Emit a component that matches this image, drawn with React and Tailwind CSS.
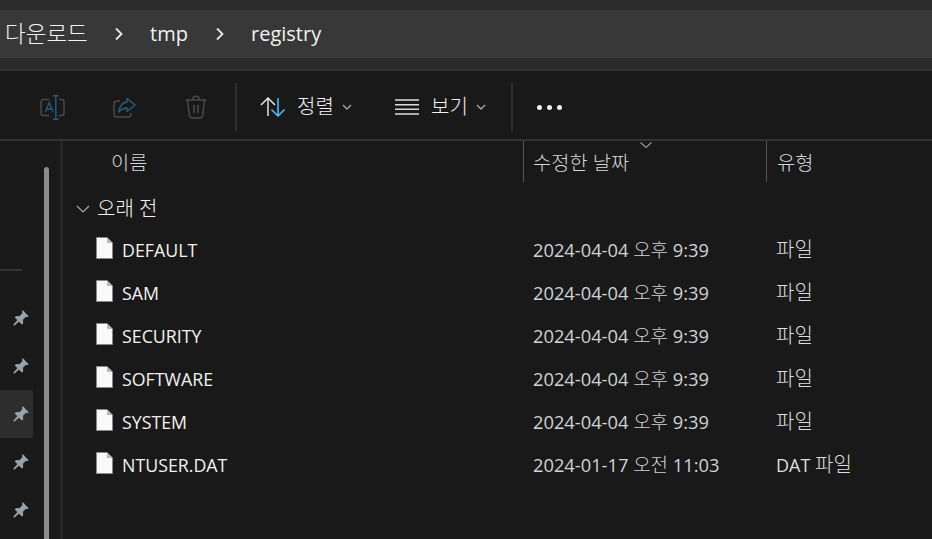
import React from 'react'

const font = '[font-family:"Open_Sans","Noto_Sans_CJK_KR",sans-serif]'

const files = [
  { name: 'DEFAULT', day: '2024-04-04', ampm: '오후', time: '9:39', type: '파일' },
  { name: 'SAM', day: '2024-04-04', ampm: '오후', time: '9:39', type: '파일' },
  { name: 'SECURITY', day: '2024-04-04', ampm: '오후', time: '9:39', type: '파일' },
  { name: 'SOFTWARE', day: '2024-04-04', ampm: '오후', time: '9:39', type: '파일' },
  { name: 'SYSTEM', day: '2024-04-04', ampm: '오후', time: '9:39', type: '파일' },
  { name: 'NTUSER.DAT', day: '2024-01-17', ampm: '오전', time: '11:03', type: '파일', ext: 'DAT' },
]

const Crumb = () => (
  <svg width="10" height="14" viewBox="0 0 10 14" fill="none" stroke="#e8e8e8" strokeWidth="1.8">
    <path d="M2 1.5 L7.5 7 L2 12.5" />
  </svg>
)

const SmallChevron = () => (
  <svg width="10" height="6" viewBox="0 0 10 6" fill="none" stroke="#a8a8a8" strokeWidth="1.3">
    <path d="M1 1 L5 5 L9 1" />
  </svg>
)

const RenameIcon = () => (
  <svg width="25" height="25" viewBox="0 0 25 25" fill="none" className="block">
    <path d="M9 4.5 H3.5 Q1 4.5 1 7 V18 Q1 20.5 3.5 20.5 H9" stroke="#4a4a4a" strokeWidth="1.4" />
    <path d="M19 4.5 H21.5 Q24 4.5 24 7 V18 Q24 20.5 21.5 20.5 H19" stroke="#4a4a4a" strokeWidth="1.4" />
    <path d="M5.5 17 L9.2 7.5 L13 17 M6.8 14 H11.7" stroke="#2a5a7c" strokeWidth="1.3" />
    <path d="M13 0.8 H18.5 M15.8 0.8 V24.2 M13 24.2 H18.5" stroke="#2a5a7c" strokeWidth="1.4" />
  </svg>
)

const ShareIcon = () => (
  <svg width="23" height="21" viewBox="0 0 23 21" fill="none" className="block">
    <path d="M7 4 H4 Q1 4 1 7 V17 Q1 20 4 20 H15 Q18 20 18 17 V16" stroke="#4a4a4a" strokeWidth="1.5" />
    <path d="M14 1.5 L22 8 L14 14.5 V11 Q9 11 6 15 Q6.5 6 14 5 Z" stroke="#2a5a7c" strokeWidth="1.5" strokeLinejoin="round" />
  </svg>
)

const TrashIcon = () => (
  <svg width="22" height="24" viewBox="0 0 22 24" fill="none" stroke="#4a4a4a" strokeWidth="1.5" className="block">
    <path d="M0.5 5 H21.5 M7.5 5 Q7.5 1.2 11 1.2 Q14.5 1.2 14.5 5" />
    <path d="M2.5 5 L4.3 20 Q4.6 23 7.5 23 H14.5 Q17.4 23 17.7 20 L19.5 5" />
    <path d="M9 10 V18 M13 10 V18" />
  </svg>
)

const SortIcon = () => (
  <svg width="26" height="20" viewBox="0 0 26 20" fill="none" strokeWidth="1.5" className="block">
    <path d="M1 8 L8 1 L15 8 M8 1 V19" stroke="#e0e0e0" />
    <path d="M18 1 V19 M11.5 12.5 L18 19 L24.5 12.5" stroke="#4cc2ff" />
  </svg>
)

const ViewIcon = () => (
  <svg width="24" height="16" viewBox="0 0 24 16" fill="none" stroke="#dcdcdc" strokeWidth="1.4" className="block">
    <path d="M0 1 H24 M0 5.7 H24 M0 10.3 H24 M0 15 H24" />
  </svg>
)

const PinIcon = () => (
  <svg width="16" height="16" viewBox="0 0 16 16" fill="#98a2a9" className="block">
    <path d="M9.8 0.3 L15.7 6.2 L14.4 7.2 L12.9 6.8 L10 9.7 L10.2 13.2 L8.8 14.4 L1.8 7.4 L3 6 L6.4 6.2 L9.3 3.2 L8.9 1.6 Z" />
    <path d="M4.6 9.8 L6.2 11.4 L1.2 15.8 L0.2 14.8 Z" />
  </svg>
)

const FileIcon = () => (
  <svg width="17" height="22" viewBox="0 0 17 22" className="block">
    <path d="M0.5 0.5 H11 L16.5 6 V21.5 H0.5 Z" fill="#fafafa" stroke="#8a8a8a" />
    <path d="M11 0.5 V6 H16.5 Z" fill="#b8b8b8" />
  </svg>
)

const Row = ({ file }) => (
  <div className="flex h-[43px] items-center">
    <div className="flex w-[461px] items-center pl-[33px] text-[17.8px]">
      <div className="-translate-y-[2px]"><FileIcon /></div>
      <span className="ml-[9px] text-[#f2f2f2]">{file.name}</span>
    </div>
    <div className="w-[243px] pl-[9px] text-[18.3px] text-[#cfd3d6]">
      {file.day} <span className="text-[19px] font-light">{file.ampm}</span> {file.time}
    </div>
    <div className="pl-[9px] text-[#dedede]">
      {file.ext && `${file.ext} `}<span className="text-[20px] font-light">{file.type}</span>
    </div>
  </div>
)

export default function App() {
  return (
    <div className={`flex h-[539px] w-[932px] flex-col overflow-hidden bg-[#191919] text-[18px] leading-[26px] ${font}`}>
      {/* address bar */}
      <div className="h-[69px] shrink-0 bg-[#2b2b2b] py-[10px]">
        <div className="flex h-[48px] items-center bg-[#383838] pl-[5px] text-[20px] text-[#f2f2f2]">
          <span className="w-[83px] text-[22.5px] font-light">다운로드</span>
          <span className="ml-[26px] flex w-[10px]"><Crumb /></span>
          <span className="ml-[26px] w-[38px]">tmp</span>
          <span className="ml-[27px] flex w-[10px]"><Crumb /></span>
          <span className="ml-[26px]">registry</span>
        </div>
      </div>

      {/* command bar */}
      <div className="flex h-[72px] shrink-0 items-center border-y-2 border-[#333333] pl-[40px] pt-[4px] text-[20px] font-light">
        <RenameIcon />
        <div className="ml-[48px]"><ShareIcon /></div>
        <div className="ml-[49px]"><TrashIcon /></div>
        <div className="ml-[28px] h-[48px] w-[2px] bg-[#2e2e2e]" />
        <div className="ml-[23px]"><SortIcon /></div>
        <span className="ml-[11px] w-[37px] text-[#f2f2f2]">정렬</span>
        <div className="ml-[8px]"><SmallChevron /></div>
        <div className="ml-[43px]"><ViewIcon /></div>
        <span className="ml-[12px] w-[37px] text-[#f2f2f2]">보기</span>
        <div className="ml-[8px]"><SmallChevron /></div>
        <div className="ml-[25px] h-[48px] w-[2px] bg-[#2e2e2e]" />
        <div className="ml-[24px] flex gap-[5px]">
          <span className="h-[5px] w-[5px] rounded-full bg-[#f2f2f2]" />
          <span className="h-[5px] w-[5px] rounded-full bg-[#f2f2f2]" />
          <span className="h-[5px] w-[5px] rounded-full bg-[#f2f2f2]" />
        </div>
      </div>

      <div className="flex min-h-0 flex-1">
        {/* navigation pane */}
        <div className="flex w-[63px] shrink-0 border-r-[3px] border-[#252525]">
          <div className="w-[33px] shrink-0 pt-[128px]">
            <div className="mr-[11px] h-[2px] bg-[#333333]" />
            <div className="mt-[23px]">
              {[0, 1, 2, 3, 4].map((i) => (
                <div
                  key={i}
                  className={`flex h-[48px] items-center justify-center rounded-r-[2px] pl-[9px] ${i === 2 ? 'bg-[#2d2d2d]' : ''}`}
                >
                  <PinIcon />
                </div>
              ))}
            </div>
          </div>
          <div className="ml-[11px] mt-[26px] w-[5px] rounded-t-full bg-[#8c8c8c]" />
        </div>

        {/* file list */}
        <div className="relative min-w-0 flex-1">
          <div className="absolute left-[577px] top-[1px]">
            <svg width="12" height="6" viewBox="0 0 12 6" fill="none" stroke="#9a9a9a" strokeWidth="1.1" className="block">
              <path d="M0.5 0.5 L6 5.5 L11.5 0.5" />
            </svg>
          </div>
          <div className="flex h-[41px] text-[19.8px] font-light">
            <div className="w-[460px] pl-[48px] pt-[9px] text-[#d4d8da]">이름</div>
            <div className="w-[243px] border-l border-[#555555] pl-[9px] pt-[9px] text-[#d4d8da]">수정한 날짜</div>
            <div className="border-l border-[#555555] pl-[10px] pt-[9px] text-[#d4d8da]">유형</div>
          </div>
          <div className="flex h-[46px] items-center pl-[13px] pt-[8px] text-[20px] font-light text-[#f2f2f2]">
            <svg width="14" height="8" viewBox="0 0 14 8" fill="none" stroke="#a8a8a8" strokeWidth="1.2" className="block">
              <path d="M1 1 L7 7 L13 1" />
            </svg>
            <span className="ml-[7px]">오래 전</span>
          </div>
          {files.map((file) => (
            <Row key={file.name} file={file} />
          ))}
        </div>
      </div>
    </div>
  )
}
